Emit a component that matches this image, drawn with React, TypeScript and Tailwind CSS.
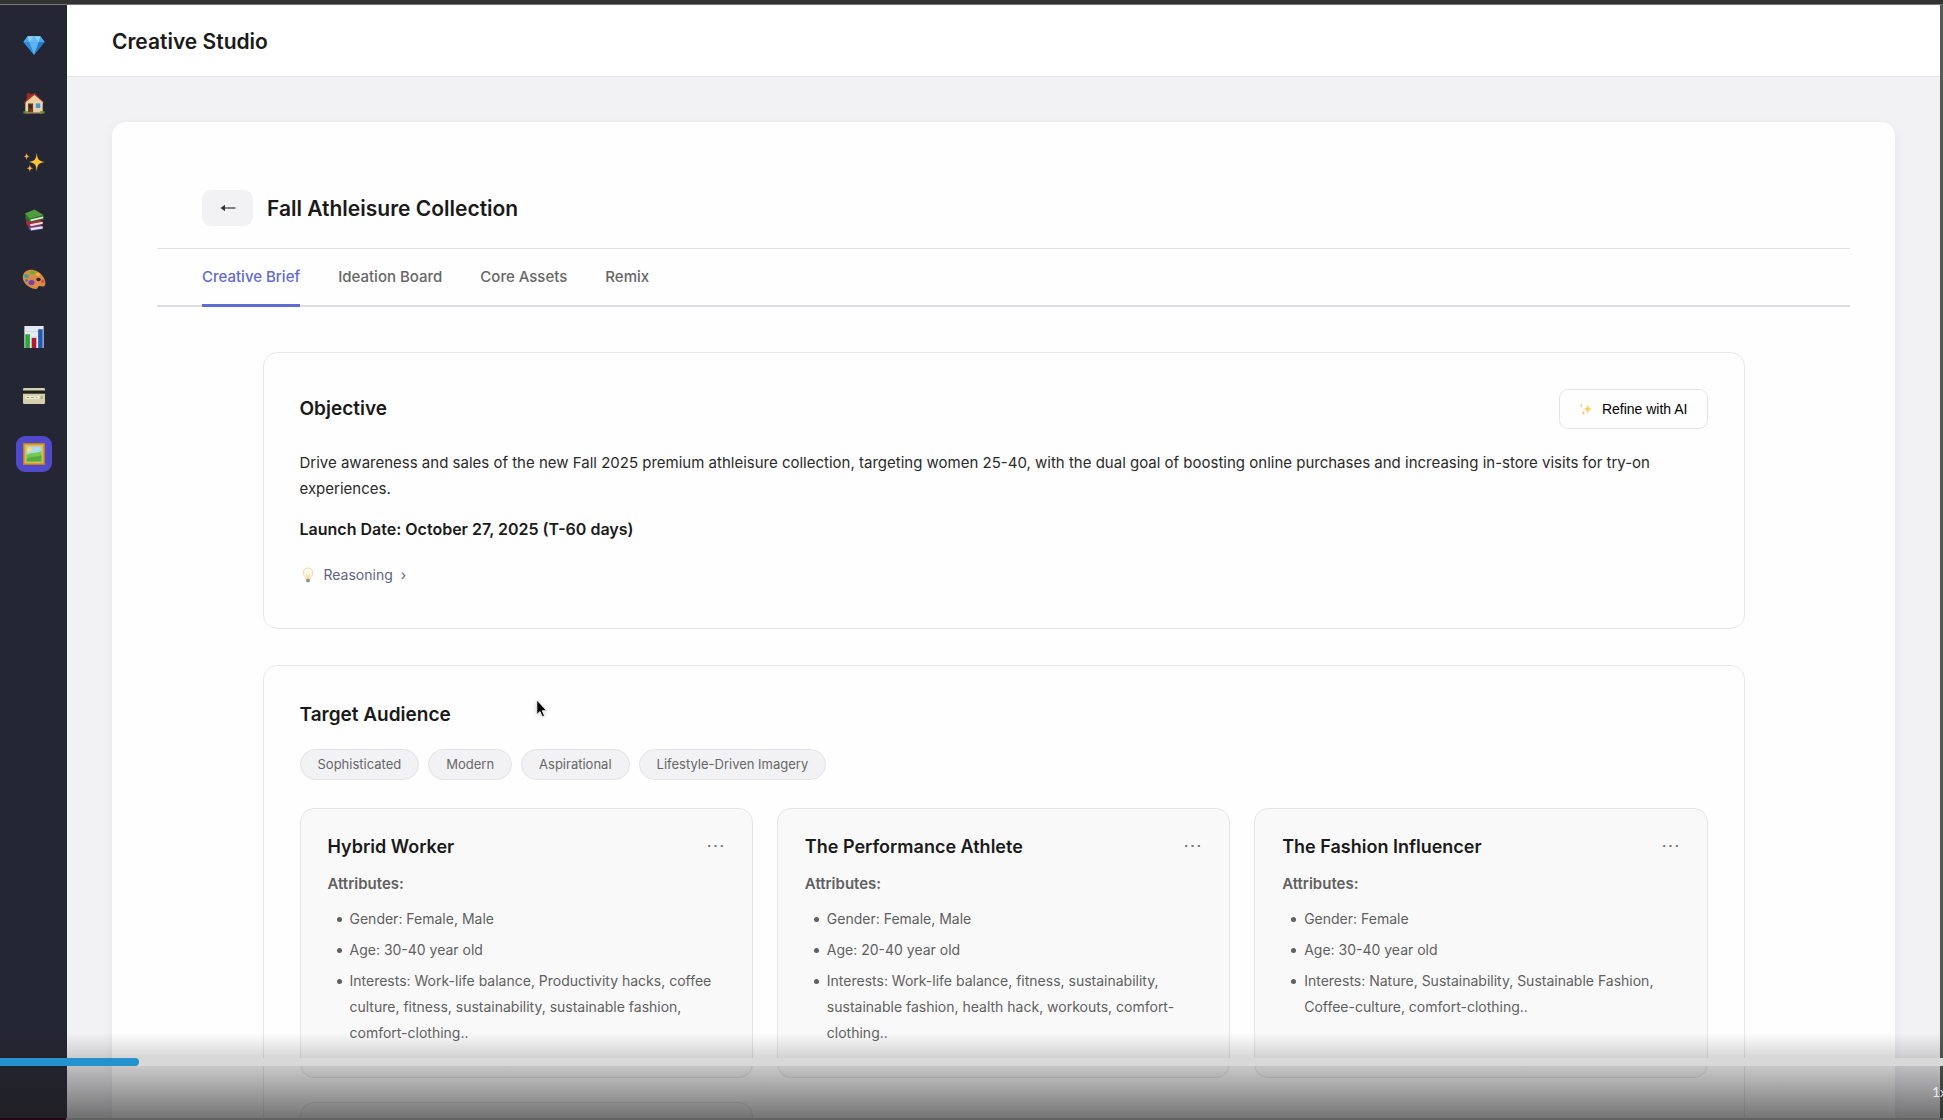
import type { ReactNode } from "react";

function Svg({ children, className = "size-[22px]" }: { children: ReactNode; className?: string }) {
  return (
    <svg viewBox="0 0 24 24" className={className} aria-hidden="true">
      {children}
    </svg>
  );
}

function Gem() {
  return (
    <Svg>
      <path d="M5 2.5h14l4.5 6.2L12 22.5.5 8.700z" fill="#3f9fe6" />
      <path d="M5 2.500 .5 8.700h6.300zM19 2.500l4.500 6.200h-6.300z" fill="#4aa9ee" />
      <path d="M5 2.500h14l-1.800 6.200H6.800z" fill="#8fd0fb" />
      <path d="M12 2.500 6.800 8.700h10.400z" fill="#63b8f5" />
      <path d="M6.800 8.700h10.400L12 22.500z" fill="#5db4f3" />
      <path d="M.5 8.700h6.300L12 22.500z" fill="#2f8bdb" />
      <path d="M23.500 8.700h-6.300L12 22.500z" fill="#2679ca" />
    </Svg>
  );
}

function House() {
  return (
    <Svg>
      <path d="M4 1h4v8H4z" fill="#8c2b22" />
      <path d="M2.500 11.500 12.500 3 21.500 11v11.500h-19z" fill="#ecd0a2" />
      <path d="M1 12.500 7.500 3l5-1.800L22.800 11l-1.300 1.300-9-7.300-10 8z" fill="#a83229" />
      <path d="M12.500 3.200 21.500 11v2H3v-2z" fill="#ecd0a2" />
      <path d="M5.500 12.500h5.500v10H5.500z" fill="#6b3a22" />
      <path d="M6.700 13.700h3V18h-3z" fill="#3b2a25" />
      <path d="M13 11.500h6.800v7H13z" fill="#f5ead2" />
      <path d="M13.800 12.300h5.200v5.400h-5.200z" fill="#4b93c4" />
      <path d="M.5 21h5l.5 2.500H.5zM18.500 21h5v2.500h-5z" fill="#5f8f2e" />
      <path d="M3 22.300h18v1.200H3z" fill="#a48a63" />
    </Svg>
  );
}

function Sparkles({ className }: { className?: string }) {
  return (
    <Svg className={className}>
      <path d="M15 2c.8 7 1.700 9 8.500 10-6.800 1-7.700 3-8.500 10.500C14.200 15 13.300 13 6.500 12 13.300 11 14.200 9 15 2z" fill="#fbc534" />
      <path d="M4 1.500c.4 3 .8 3.700 3.500 4.200C4.800 6.200 4.400 7 4 10 3.600 7 3.200 6.200.5 5.700 3.200 5.200 3.600 4.500 4 1.500z" fill="#efb547" />
      <path d="M7.500 14.500c.4 3 .8 3.700 3.500 4.200-2.700.5-3.100 1.300-3.500 4.300-.4-3-.8-3.800-3.500-4.300 2.700-.5 3.100-1.200 3.500-4.200z" fill="#f4b43a" />
    </Svg>
  );
}

function Books() {
  return (
    <Svg>
      <path d="M5.500 18.500 18 16.500l3.500 2.500v3L9 24l-2.500-1.500z" fill="#5d4a8f" />
      <path d="m8 20.800 13.500-2v2.400L9 23.200z" fill="#e8e6ec" />
      <path d="m3 13 14-2 4.500 3v3L8 19.500 4 17.500z" fill="#b3263a" />
      <path d="m7.500 16.500 14-2.500v2.200L8.500 18.700z" fill="#ece3e0" />
      <path d="m2 6 5 4 15.500-3.500v5L7.500 14.500 3 12z" fill="#2d6f2a" />
      <path d="m8 11.500 14-3.300v2L8.500 13.300z" fill="#e5ebdd" />
      <path d="M2 5 12.500.5 22.500 6.500 7 10.500z" fill="#4f9d3c" />
    </Svg>
  );
}

function Palette() {
  return (
    <Svg className="size-6">
      <path d="M1 9C2 3 9 1 15.500 4.500 21 7.500 24.500 14 23 18c-1 2.500-4 1-5.500 1-2 0-1 3.500-4.500 3C7 21-.5 15.500 1 9z" fill="#d98c46" />
      <ellipse cx="16.500" cy="12.500" rx="2.200" ry="1.700" fill="#252633" />
      <ellipse cx="4.500" cy="9" rx="2.300" ry="1.900" fill="#2fa7a0" />
      <ellipse cx="10.500" cy="5.500" rx="2.600" ry="1.800" fill="#5cb531" />
      <ellipse cx="16" cy="7.500" rx="2" ry="1.400" fill="#e7b93b" />
      <ellipse cx="9.500" cy="15.500" rx="3" ry="2.600" fill="#7d3fa5" />
      <ellipse cx="20.700" cy="14.500" rx="1.500" ry="1.900" fill="#dd4a3c" />
      <ellipse cx="4.500" cy="13.500" rx="1.500" ry="1.200" fill="#4a74c9" />
    </Svg>
  );
}

function Chart() {
  return (
    <Svg>
      <path d="M1.500 0h21v24h-21z" fill="#e4e9f2" />
      <path d="M1.500 6h21M1.500 12h21M1.500 18h21" stroke="#c6cedd" strokeWidth=".7" />
      <path d="M2.500 9h5v15h-5z" fill="#2aa536" />
      <path d="M9.500 13h5v11h-5z" fill="#b11a28" />
      <path d="M16.500 3.500h5V24h-5z" fill="#1f5bb0" />
    </Svg>
  );
}

function CreditCard() {
  return (
    <Svg className="size-6">
      <rect x="1" y="4" width="22" height="16" rx="1.200" fill="#d5d1ae" />
      <path d="M1 6.500h22v3.200H1z" fill="#1f1e1a" />
      <path d="M3.500 12h14v3h-14z" fill="#efedda" />
      <path d="M4.500 13.500h3m1.500 0h3m1.500-.5 2 .8" stroke="#8f8b78" strokeWidth=".8" />
      <path d="M18.500 12h2.500v3h-2.500z" fill="#b6b18d" />
    </Svg>
  );
}

function Picture() {
  return (
    <Svg className="size-6">
      <rect x="1" y="1" width="22" height="22" fill="#b98224" />
      <rect x="2.500" y="2.500" width="19" height="19" fill="#e5b64a" />
      <rect x="4.500" y="4.500" width="15" height="15" fill="#a8dcee" />
      <circle cx="7.500" cy="7.500" r="2.200" fill="#f8e36e" />
      <path d="M4.500 13c4-3 9-1 15-4v10.500h-15z" fill="#79c84d" />
      <path d="M4.500 17c5-4 10-1 15-4v6.500h-15z" fill="#52ae3e" />
    </Svg>
  );
}

function Bulb() {
  return (
    <Svg className="size-4">
      <path d="M12 1.500a7 7 0 0 0-7 7.500c0 4 3.500 5.500 4 9h6c.5-3.500 4-5 4-9a7 7 0 0 0-7-7.500z" fill="#fefaea" stroke="#ecd9a4" strokeWidth="1.500" />
      <path d="M10 10.500 11 17h2l1-6.500" stroke="#eac878" strokeWidth="1.200" fill="none" />
      <path d="M9.500 18h5v3.500L13 23h-2l-1.500-1.500z" fill="#8d8d8d" />
    </Svg>
  );
}

const navItems = [
  { label: "Home", icon: <House /> },
  { label: "Generate", icon: <Sparkles /> },
  { label: "Library", icon: <Books /> },
  { label: "Design", icon: <Palette /> },
  { label: "Analytics", icon: <Chart /> },
  { label: "Billing", icon: <CreditCard /> },
  { label: "Creative Studio", icon: <Picture />, active: true },
];

const tabs = ["Creative Brief", "Ideation Board", "Core Assets", "Remix"];
const tones = ["Sophisticated", "Modern", "Aspirational", "Lifestyle-Driven Imagery"];

const personas = [
  {
    name: "Hybrid Worker",
    attributes: [
      "Gender: Female, Male",
      "Age: 30-40 year old",
      "Interests: Work-life balance, Productivity hacks, coffee culture, fitness, sustainability, sustainable fashion, comfort-clothing..",
    ],
  },
  {
    name: "The Performance Athlete",
    attributes: [
      "Gender: Female, Male",
      "Age: 20-40 year old",
      "Interests: Work-life balance, fitness, sustainability, sustainable fashion, health hack, workouts, comfort-clothing..",
    ],
  },
  {
    name: "The Fashion Influencer",
    attributes: [
      "Gender: Female",
      "Age: 30-40 year old",
      "Interests: Nature, Sustainability, Sustainable Fashion, Coffee-culture, comfort-clothing..",
    ],
  },
];

function Sidebar() {
  return (
    <aside className="flex w-[67px] shrink-0 flex-col items-center gap-[22px] bg-[#252633] pt-[22px]">
      <a href="#home" aria-label="Brand" className="flex size-9 items-center justify-center">
        <Gem />
      </a>
      <nav className="flex h-[387px] flex-col justify-between">
        {navItems.map((item) => (
          <a
            key={item.label}
            href={`#${item.label.toLowerCase().replace(" ", "-")}`}
            aria-label={item.label}
            className={`flex size-9 items-center justify-center rounded-[9px] ${item.active ? "bg-[#5149cb]" : ""}`}
          >
            {item.icon}
          </a>
        ))}
      </nav>
    </aside>
  );
}

function PersonaCard({ name, attributes }: { name: string; attributes: string[] }) {
  return (
    <article className="rounded-[14px] border border-[#e5e5e8] bg-[#f9f9fa] px-[27px] pt-[23px] pb-[31px]">
      <div className="flex h-7 items-center justify-between">
        <h3 className="text-[18px] font-semibold text-[#1a1a1a]">{name}</h3>
        <button aria-label={`More options for ${name}`} className="text-[19px] leading-7 text-[#777]">
          ⋯
        </button>
      </div>
      <p className="mt-[11px] text-[15px] leading-[26px] font-semibold text-[#606060]">Attributes:</p>
      <ul className="mt-[9px] flex flex-col gap-[5px] pl-[22px] text-[14px] leading-[26px] text-[#606060]">
        {attributes.map((a) => (
          <li
            key={a}
            className="relative before:absolute before:top-[11px] before:-left-[13px] before:size-[5px] before:rounded-full before:bg-[#606060]"
          >
            {a}
          </li>
        ))}
      </ul>
    </article>
  );
}

function PlayerOverlay() {
  return (
    <div className="absolute inset-x-0 bottom-0 flex h-[87px] flex-col overflow-hidden bg-linear-to-b from-[#1c1c1c]/0 to-[#1c1c1c]/62 pt-[25px]">
      <div role="progressbar" aria-label="Playback position" aria-valuenow={7} className="h-2 shrink-0 bg-[#d8d8d8]">
        <div className="h-full w-[139px] rounded-r-full bg-[#2492cc]" />
      </div>
      <button aria-label="Playback speed" className="mt-[18px] -mr-1 self-end font-['Lato',sans-serif] text-[14px] leading-4 text-white/80">
        1x
      </button>
      <div className="mt-auto flex h-0.5">
        <div className="w-[66px] bg-[#220618]" />
        <div className="grow bg-[#636363]" />
      </div>
    </div>
  );
}

export default function App() {
  return (
    <div className="relative flex h-screen flex-col overflow-hidden bg-[#f2f2f5] font-['Inter',sans-serif] text-[#1a1a1a]">
      <div className="h-[5px] shrink-0 border-b border-[#777] bg-[#333]" />
      <div className="flex min-h-0 grow border-r-3 border-[#585858]">
        <Sidebar />
        <div className="min-w-0 grow">
          <header className="flex h-[72px] items-center border-b border-[#e5e5e8] bg-white px-[45px] pt-0.5">
            <h1 className="text-[21px] font-semibold">Creative Studio</h1>
          </header>
          <main className="px-[45px] pt-[45px]">
            <div className="rounded-[14px] bg-[#fefefe] p-[45px] shadow-[0_2px_12px_rgba(0,0,0,0.05)]">
              <div className="flex items-center gap-[14px] border-b border-[#e2e2e5] px-[45px] pt-[23px] pb-[22px]">
                <button aria-label="Back" className="flex h-9 w-[51px] items-center justify-center rounded-[9px] bg-[#f2f2f5]">
                  <svg viewBox="0 0 18 12" className="h-3 w-[18px]" aria-hidden="true">
                    <path d="M4 6h12.500" stroke="#444" strokeWidth="1.300" />
                    <path d="M1.500 6 6 2.800v6.400z" fill="#333" />
                  </svg>
                </button>
                <h2 className="pt-0.5 text-[21px] font-semibold">Fall Athleisure Collection</h2>
              </div>
              <nav className="flex gap-[38px] border-b-2 border-[#dedee2] px-[45px]">
                {tabs.map((tab, i) => (
                  <button
                    key={tab}
                    className={`-mb-0.5 h-[58px] border-b-3 pt-0.5 text-[15px] font-medium ${
                      i === 0 ? "border-[#5e6bd3] text-[#5e6bd3]" : "border-transparent text-[#666]"
                    }`}
                  >
                    {tab}
                  </button>
                ))}
              </nav>

              <div className="mx-auto mt-[45px] flex max-w-[1482px] flex-col gap-9">
                <section className="rounded-[14px] border border-[#e8e8eb] px-9 pt-9 pb-10">
                  <div className="flex items-center justify-between">
                    <h2 className="text-[19px] font-semibold">Objective</h2>
                    <button className="flex h-10 items-center gap-[9px] rounded-[9px] border border-[#e5e5e8] px-[19px] font-['Liberation_Sans',Arial,sans-serif] text-[14px] text-black">
                      <Sparkles className="size-[14px] opacity-80" />
                      Refine with AI
                    </button>
                  </div>
                  <p className="mt-[21px] text-[15px] leading-[26px] text-[#2a2a2a]">
                    Drive awareness and sales of the new Fall 2025 premium athleisure collection, targeting women 25-40,
                    with the dual goal of boosting online purchases and increasing in-store visits for try-on
                    experiences.
                  </p>
                  <p className="mt-[14px] text-[16px] leading-[26px] font-semibold">
                    Launch Date: October 27, 2025 (T-60 days)
                  </p>
                  <button className="mt-5 flex items-center gap-2 text-[14px] leading-[26px] text-[#5f6385]">
                    <Bulb />
                    Reasoning
                    <span>›</span>
                  </button>
                </section>

                <section className="rounded-[14px] border border-[#e8e8eb] px-9 pt-9 pb-10">
                  <h2 className="text-[19px] leading-[26px] font-semibold">Target Audience</h2>
                  <ul className="mt-[21px] flex flex-wrap gap-[9px]">
                    {tones.map((tone) => (
                      <li
                        key={tone}
                        className="flex h-[31px] items-center rounded-full border border-[#e3e3e6] bg-[#f2f2f5] px-[17px] text-[13px] text-[#666]"
                      >
                        {tone}
                      </li>
                    ))}
                  </ul>
                  <div className="mt-7 grid grid-cols-3 gap-6">
                    {personas.map((p) => (
                      <PersonaCard key={p.name} {...p} />
                    ))}
                    <article className="h-[269px] rounded-[14px] border border-[#e5e5e8] bg-[#f9f9fa]" />
                  </div>
                </section>
              </div>
            </div>
          </main>
        </div>
      </div>
      <PlayerOverlay />
      <svg viewBox="0 0 12 19" className="absolute top-[699px] left-[536px] h-[19px] w-3 drop-shadow-sm" aria-hidden="true">
        <path d="M.8 1v14.500l3.200-3 2.300 5.200 2.200-1-2.300-5h4.500z" fill="#000" stroke="#fff" strokeWidth=".8" />
      </svg>
    </div>
  );
}
